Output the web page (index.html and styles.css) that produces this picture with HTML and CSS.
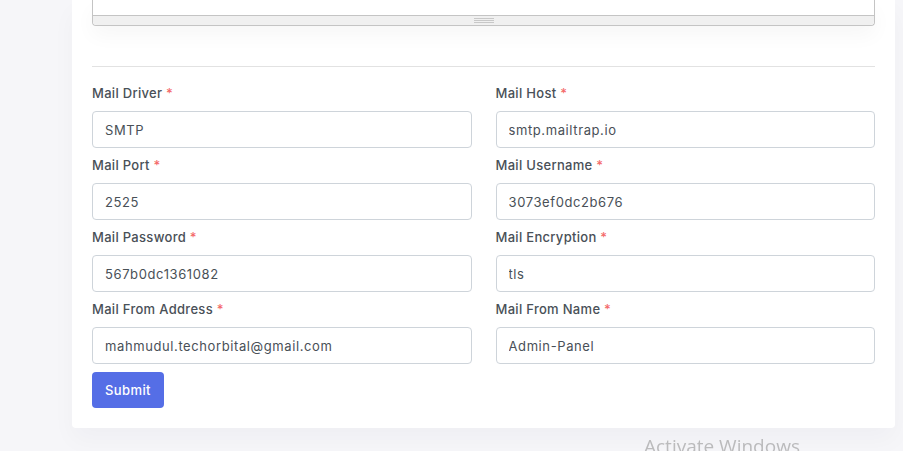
FILE: index.html
```html
<!DOCTYPE html>
<html lang="en">
<head>
<meta charset="utf-8">
<title>Mail Settings</title>
<link rel="stylesheet" href="styles.css">
</head>
<body>
<div class="page">
  <div class="card">
    <div class="editor">
      <div class="editor-area"></div>
      <div class="statusbar"><span class="grip"></span></div>
    </div>
    <hr class="divider">
    <form class="form">
      <div class="grid">
        <div class="field">
          <label class="label">Mail Driver <span class="req">*</span></label>
          <input class="input" type="text" value="SMTP">
        </div>
        <div class="field">
          <label class="label">Mail Host <span class="req">*</span></label>
          <input class="input" type="text" value="smtp.mailtrap.io">
        </div>
        <div class="field">
          <label class="label">Mail Port <span class="req">*</span></label>
          <input class="input" type="text" value="2525">
        </div>
        <div class="field">
          <label class="label">Mail Username <span class="req">*</span></label>
          <input class="input" type="text" value="3073ef0dc2b676">
        </div>
        <div class="field">
          <label class="label">Mail Password <span class="req">*</span></label>
          <input class="input" type="text" value="567b0dc1361082">
        </div>
        <div class="field">
          <label class="label">Mail Encryption <span class="req">*</span></label>
          <input class="input" type="text" value="tls">
        </div>
        <div class="field">
          <label class="label">Mail From Address <span class="req">*</span></label>
          <input class="input" type="text" value="mahmudul.techorbital@gmail.com">
        </div>
        <div class="field">
          <label class="label">Mail From Name <span class="req">*</span></label>
          <input class="input" type="text" value="Admin-Panel">
        </div>
      </div>
      <button class="btn" type="button">Submit</button>
    </form>
  </div>
</div>
<div class="watermark">Activate Windows</div>
</body>
</html>
```

FILE: styles.css
```css
html, body {
  margin: 0;
  padding: 0;
}
body {
  background: #f6f6f9;
  font-family: "Inter", "Noto Sans", sans-serif;
  font-size: 13px;
  color: #495057;
  height: 451px;
  overflow: hidden;
}
.page {
  padding-left: 72px;
  padding-right: 8px;
}
.card {
  background: #fff;
  border-radius: 0 0 4px 4px;
  padding: 0 20px 20px;
  box-shadow: 0 12px 24px rgba(18, 38, 63, 0.03);
}
.editor {
  border: 1px solid #c4c4c4;
  border-top: none;
  border-radius: 0 0 4px 4px;
  box-shadow: 0 10px 20px rgba(0, 0, 0, 0.035);
}
.editor-area {
  height: 15px;
  background: #fff;
}
.statusbar {
  height: 9px;
  background: #f0f0f0;
  border-top: 1px solid #c4c4c4;
  border-radius: 0 0 4px 4px;
  display: flex;
  justify-content: center;
  align-items: center;
}
.grip {
  width: 20px;
  height: 5px;
  border-top: 1px solid #c8c8c8;
  border-bottom: 1px solid #c8c8c8;
  box-sizing: border-box;
  background: linear-gradient(#c8c8c8, #c8c8c8) center / 100% 1px no-repeat;
}
.divider {
  border: none;
  border-top: 1px solid #e2e2e2;
  margin: 40px 0 17px;
}
.grid {
  display: grid;
  grid-template-columns: 1fr 1fr;
  column-gap: 24px;
  row-gap: 8px;
}
.field {
  display: flex;
  flex-direction: column;
}
.label {
  font-weight: 500;
  line-height: 19px;
  margin-bottom: 8px;
  color: #495057;
  letter-spacing: 0.3px;
}
.req {
  color: #f46a6a;
}
.input {
  height: 37px;
  box-sizing: border-box;
  border: 1px solid #ced4da;
  border-radius: 4px;
  padding: 0 12px;
  font-family: inherit;
  font-size: 13px;
  letter-spacing: 0.6px;
  color: #495057;
  background: #fff;
  outline: none;
}
.btn {
  margin-top: 8px;
  height: 36px;
  width: 72px;
  border: none;
  border-radius: 4px;
  background: #556ee6;
  color: #fff;
  font-family: inherit;
  font-size: 13px;
  font-weight: 500;
  letter-spacing: 0.4px;
  padding: 0;
}
.watermark {
  position: fixed;
  left: 644px;
  top: 433px;
  font-family: "Open Sans", "Noto Sans", sans-serif;
  font-size: 19px;
  color: rgba(140, 140, 140, 0.55);
  white-space: nowrap;
}
```
